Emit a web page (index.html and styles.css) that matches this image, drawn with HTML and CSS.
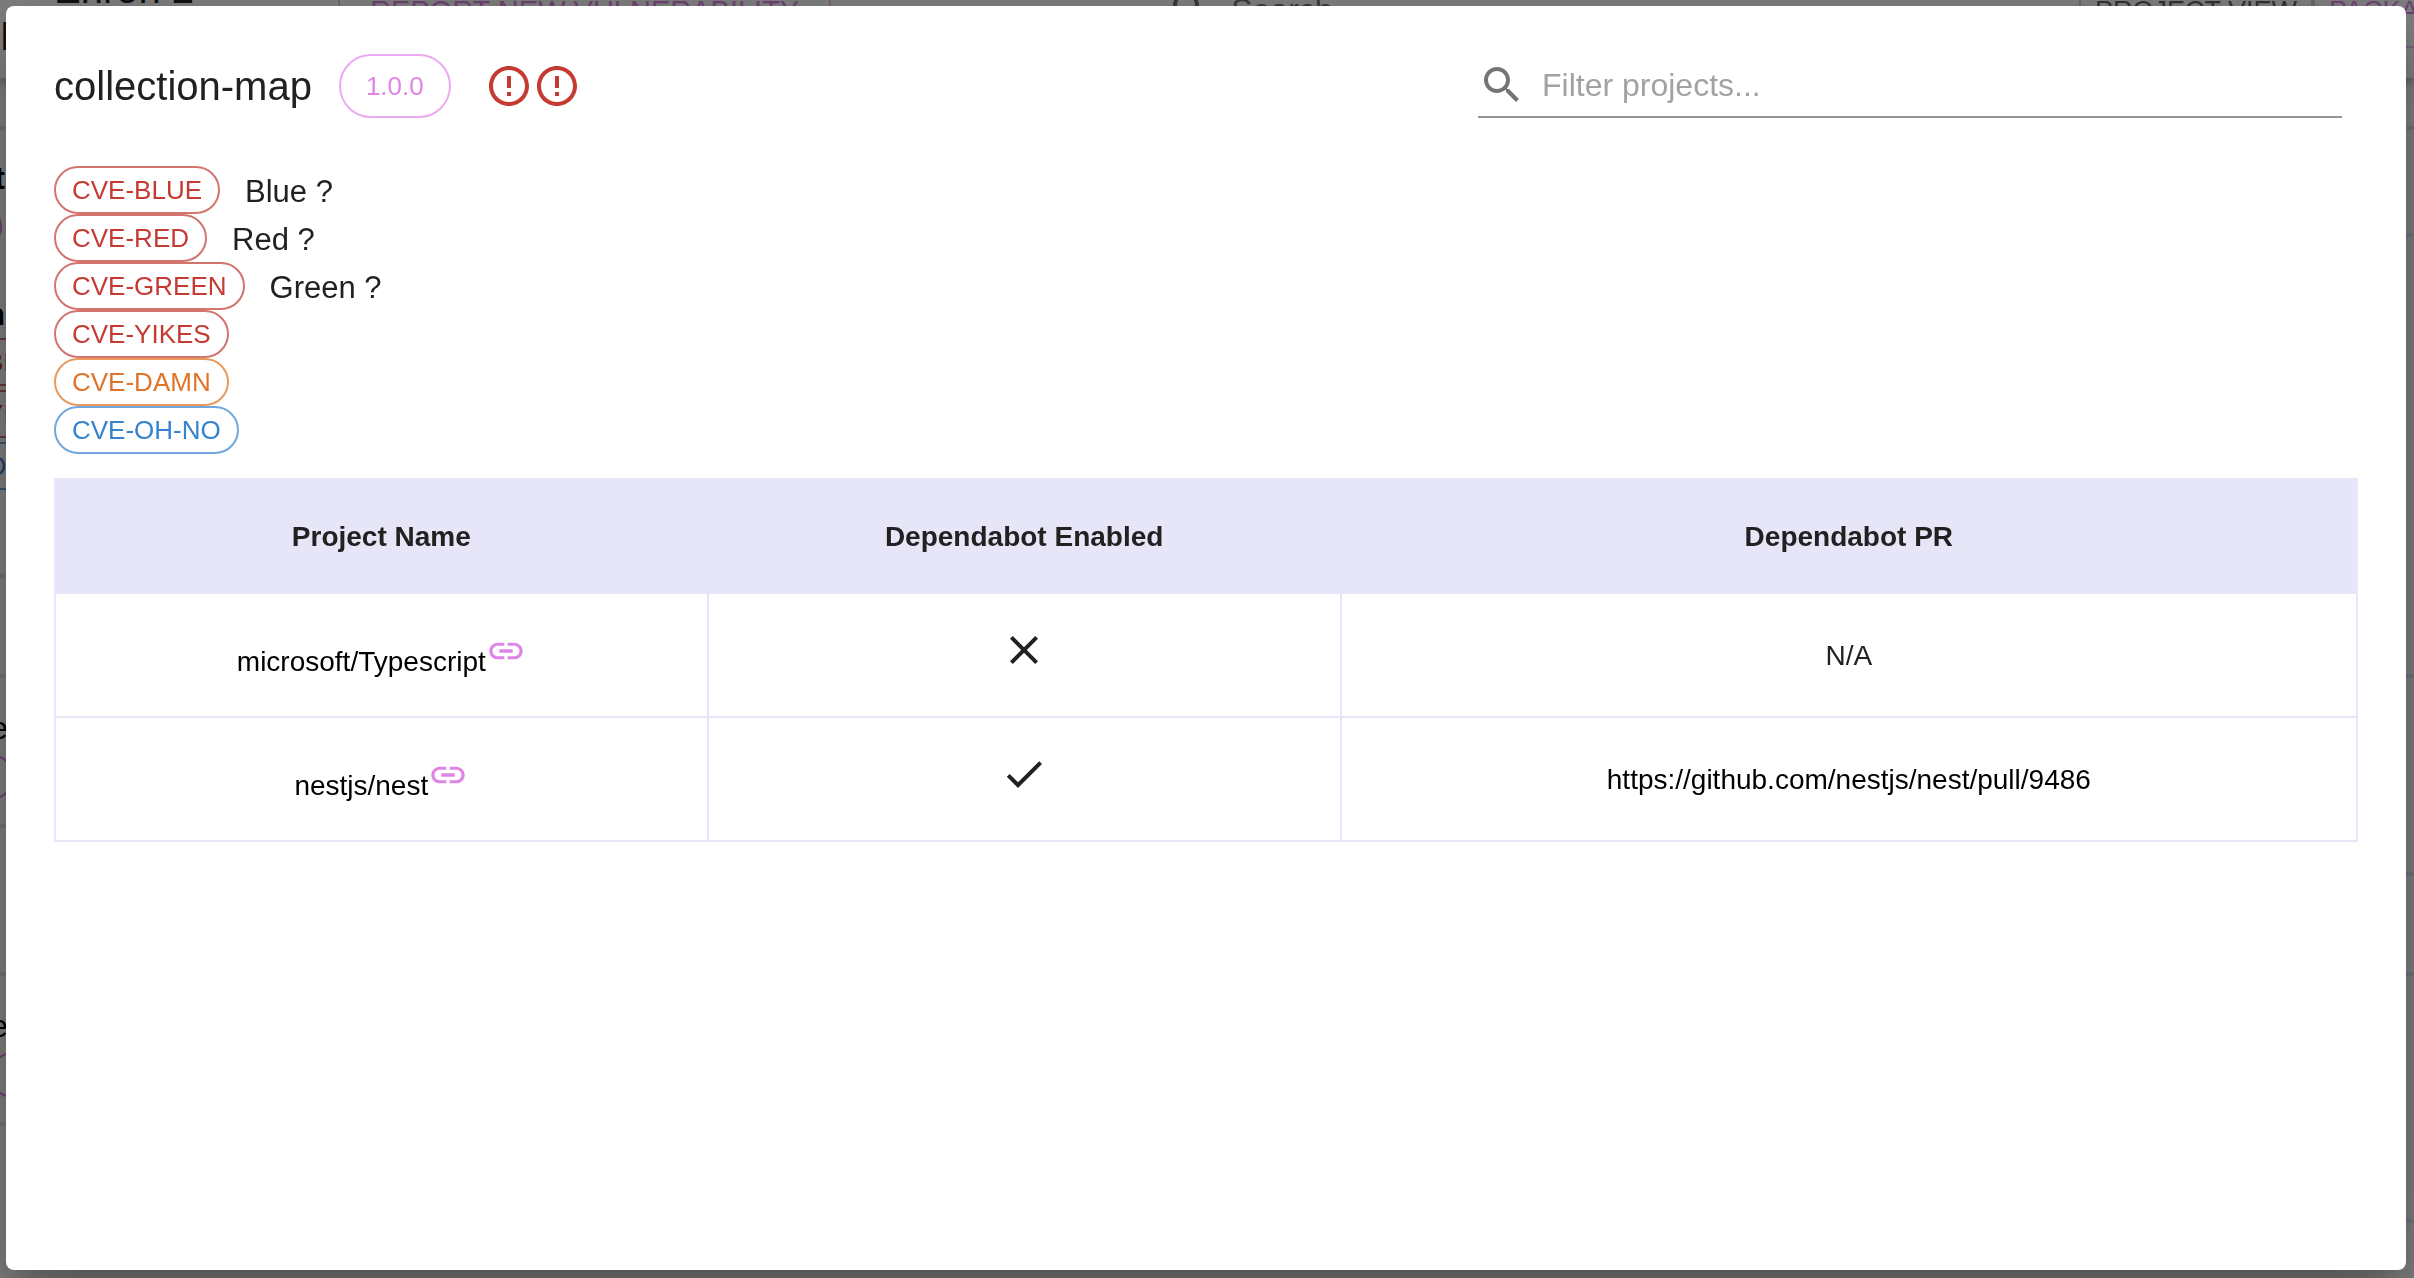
FILE: index.html
```html
<!DOCTYPE html>
<html lang="en">
<head>
<meta charset="utf-8">
<title>collection-map</title>
<link rel="stylesheet" href="styles.css">
</head>
<body>
<div class="page" inert>
  <header class="appbar">
    <div class="brand"><span class="brand-top">Enron 2</span><span>D</span></div>
    <button class="outline-btn report" type="button">REPORT NEW VULNERABILITY</button>
    <label class="page-search">
      <svg class="icon-lg" viewBox="0 0 24 24"><path d="M15.5 14h-.79l-.28-.27C15.41 12.59 16 11.11 16 9.5 16 5.91 13.09 3 9.5 3S3 5.91 3 9.5 5.91 16 9.5 16c1.61 0 3.09-.59 4.23-1.57l.27.28v.79l5 4.99L20.49 19l-4.99-5zm-6 0C7.01 14 5 11.99 5 9.5S7.01 5 9.5 5 14 7.01 14 9.5 11.99 14 9.5 14z"/></svg>
      <input class="page-search-input" type="text" placeholder="Search">
    </label>
    <div class="view-switch">
      <button class="outline-btn view current" type="button">PROJECT VIEW</button>
      <button class="outline-btn view" type="button">PACKAGE VIEW</button>
    </div>
  </header>
  <div class="cards">
    <section class="card card-tall">
      <div class="edge strong">t</div>
      <div class="edge-chip version"></div>
      <div class="edge strong">n</div>
      <div class="edge-chips">
        <span class="chip high">CVE-BLUE</span>
        <span class="chip high">CVE-YIKES</span>
        <span class="chip low">CVE-OH-NO</span>
      </div>
    </section>
    <section class="card card-xs"></section>
    <section class="card card-sm"><div class="edge">e</div><div class="edge-chip ends"></div></section>
    <section class="card card-md"></section>
    <section class="card card-sm"><div class="edge">e</div><div class="edge-chip starts"></div></section>
    <section class="card card-lg"></section>
  </div>
</div>

<div class="backdrop">
  <div class="dialog" role="dialog" aria-modal="true" aria-labelledby="dialog-title">
    <div class="dialog-head">
      <h1 class="dialog-title" id="dialog-title">collection-map</h1>
      <span class="version-chip">1.0.0</span>
      <div class="alerts">
        <svg class="icon-lg" viewBox="0 0 24 24" role="img" aria-label="Alert"><path d="M11 15h2v2h-2zm0-8h2v6h-2zm.99-5C6.47 2 2 6.48 2 12s4.47 10 9.99 10C17.52 22 22 17.52 22 12S17.52 2 11.99 2zM12 20c-4.42 0-8-3.58-8-8s3.58-8 8-8 8 3.58 8 8-3.58 8-8 8z"/></svg>
        <svg class="icon-lg" viewBox="0 0 24 24" role="img" aria-label="Alert"><path d="M11 15h2v2h-2zm0-8h2v6h-2zm.99-5C6.47 2 2 6.48 2 12s4.47 10 9.99 10C17.52 22 22 17.52 22 12S17.52 2 11.99 2zM12 20c-4.42 0-8-3.58-8-8s3.58-8 8-8 8 3.58 8 8-3.58 8-8 8z"/></svg>
      </div>
      <label class="filter">
        <svg class="icon-lg" viewBox="0 0 24 24" role="img" aria-label="Filter projects"><path d="M15.5 14h-.79l-.28-.27C15.41 12.59 16 11.11 16 9.5 16 5.91 13.09 3 9.5 3S3 5.91 3 9.5 5.91 16 9.5 16c1.61 0 3.09-.59 4.23-1.57l.27.28v.79l5 4.99L20.49 19l-4.99-5zm-6 0C7.01 14 5 11.99 5 9.5S7.01 5 9.5 5 14 7.01 14 9.5 11.99 14 9.5 14z"/></svg>
        <input class="filter-input" type="text" placeholder="Filter projects...">
      </label>
    </div>

    <ul class="cve-list">
      <li class="cve"><span class="chip high">CVE-BLUE</span><span class="cve-note">Blue ?</span></li>
      <li class="cve"><span class="chip high">CVE-RED</span><span class="cve-note">Red ?</span></li>
      <li class="cve"><span class="chip high">CVE-GREEN</span><span class="cve-note">Green ?</span></li>
      <li class="cve"><span class="chip high">CVE-YIKES</span></li>
      <li class="cve"><span class="chip medium">CVE-DAMN</span></li>
      <li class="cve"><span class="chip low">CVE-OH-NO</span></li>
    </ul>

    <table class="projects">
      <colgroup><col class="col-name"><col class="col-enabled"><col></colgroup>
      <thead>
        <tr><th scope="col">Project Name</th><th scope="col">Dependabot Enabled</th><th scope="col">Dependabot PR</th></tr>
      </thead>
      <tbody>
        <tr>
          <td><a class="project-link" href="https://github.com/microsoft/Typescript">microsoft/Typescript<svg class="icon-link" viewBox="0 0 24 24"><path d="M3.9 12c0-1.71 1.39-3.1 3.1-3.1h4V7H7c-2.76 0-5 2.24-5 5s2.24 5 5 5h4v-1.9H7c-1.71 0-3.1-1.39-3.1-3.1zM8 13h8v-2H8v2zm9-6h-4v1.9h4c1.71 0 3.1 1.39 3.1 3.1s-1.39 3.1-3.1 3.1h-4V17h4c2.76 0 5-2.24 5-5s-2.24-5-5-5z"/></svg></a></td>
          <td><svg class="icon-lg state" viewBox="0 0 24 24" role="img" aria-label="No"><path d="M19 6.41 17.59 5 12 10.59 6.41 5 5 6.41 10.59 12 5 17.59 6.41 19 12 13.41 17.59 19 19 17.59 13.41 12z"/></svg></td>
          <td>N/A</td>
        </tr>
        <tr>
          <td><a class="project-link" href="https://github.com/nestjs/nest">nestjs/nest<svg class="icon-link" viewBox="0 0 24 24"><path d="M3.9 12c0-1.71 1.39-3.1 3.1-3.1h4V7H7c-2.76 0-5 2.24-5 5s2.24 5 5 5h4v-1.9H7c-1.71 0-3.1-1.39-3.1-3.1zM8 13h8v-2H8v2zm9-6h-4v1.9h4c1.71 0 3.1 1.39 3.1 3.1s-1.39 3.1-3.1 3.1h-4V17h4c2.76 0 5-2.24 5-5s-2.24-5-5-5z"/></svg></a></td>
          <td><svg class="icon-lg state" viewBox="0 0 24 24" role="img" aria-label="Yes"><path d="M9 16.17 4.83 12l-1.42 1.41L9 19 21 7l-1.41-1.41z"/></svg></td>
          <td><a class="project-link" href="https://github.com/nestjs/nest/pull/9486">https://github.com/nestjs/nest/pull/9486</a></td>
        </tr>
      </tbody>
    </table>
  </div>
</div>
</body>
</html>
```
FILE: styles.css
```css
* {
  box-sizing: border-box;
}

html,
body {
  height: 100%;
}

body {
  margin: 0;
  overflow: hidden;
  background: #fff;
  color: #212121;
  font-family: "Liberation Sans", Arial, Helvetica, sans-serif;
  font-size: 28px;
  line-height: 40px;
}

svg {
  fill: currentColor;
}

.icon-lg {
  flex: none;
  width: 48px;
  height: 48px;
}

/* Page behind the dialog, scrolled down and right */

.page {
  margin-top: -58px;
}

.appbar {
  display: flex;
  align-items: center;
  height: 136px;
  box-shadow: 0 4px 8px rgba(0, 0, 0, 0.2), 0 8px 20px rgba(0, 0, 0, 0.16);
}

.brand {
  display: flex;
  flex-direction: column;
  width: 338px;
  padding-top: 6px;
  font-size: 40px;
  line-height: 47px;
}

.brand-top {
  padding-left: 54px;
}

.outline-btn {
  flex: none;
  height: 76px;
  padding: 2px 16px 0;
  border: 2px solid #f0c3f4;
  background: none;
  color: #df85e8;
  font: inherit;
  font-size: 27px;
  white-space: nowrap;
}

.outline-btn.report {
  padding: 2px 30px 0;
  border-radius: 8px;
  font-size: 29px;
}

.outline-btn.view {
  padding: 2px 14px 0;
}

.outline-btn.current {
  border-color: #d0d0d0;
  color: #666;
}

.page-search {
  display: flex;
  flex: 1;
  align-items: center;
  gap: 16px;
  padding-left: 336px;
  color: #757575;
}

.page-search-input {
  width: 400px;
  padding: 0;
  border: 0;
  background: none;
  font: inherit;
  font-size: 32px;
}

.view-switch {
  display: flex;
  margin-right: -136px;
}

.cards {
  display: grid;
  grid-template-columns: 1fr 1fr;
  gap: 96px;
  align-items: start;
  margin: 48px -100px 0 -94px;
}

.card {
  border: 4px solid #e6e6fa;
}

.card-tall {
  height: 452px;
  padding-top: 28px;
}

.card-xs {
  height: 111px;
}

.card-sm {
  height: 154px;
  padding-top: 30px;
}

.card-md {
  height: 202px;
}

.card-lg {
  height: 251px;
}

.edge {
  width: 98px;
  color: #000;
  font-size: 32px;
  text-align: right;
}

.edge.strong {
  width: 95px;
  font-weight: bold;
}

.edge-chip {
  width: 92px;
  height: 46px;
  margin-top: 6px;
  border: 2px solid #df85e8;
  border-radius: 23px;
}

.edge-chip.version {
  margin-bottom: 44px;
}

.edge-chip.ends {
  width: 104px;
}

.edge-chip.starts {
  margin-left: 80px;
}

.edge-chips {
  display: flex;
  flex-direction: column;
  gap: 4px;
  align-items: flex-start;
  margin: 4px 0 0 -4px;
}

/* Dialog */

.backdrop {
  position: fixed;
  inset: 0;
  display: flex;
  padding: 6px 8px 8px 6px;
  background: rgba(0, 0, 0, 0.5);
}

.dialog {
  flex: 1;
  padding: 48px;
  overflow: auto;
  border-radius: 8px;
  background: #fff;
  box-shadow:
    0 22px 30px -14px rgba(0, 0, 0, 0.2),
    0 48px 76px 6px rgba(0, 0, 0, 0.14),
    0 18px 92px 16px rgba(0, 0, 0, 0.12);
}

.dialog-head {
  display: flex;
  align-items: center;
  height: 64px;
}

.dialog-title {
  margin: 0 27px 0 0;
  font-size: 40px;
  font-weight: normal;
}

.version-chip {
  padding: 10px 25px;
  border: 2px solid #ecaaf2;
  border-radius: 32px;
  color: #df85e8;
  font-size: 26px;
}

.alerts {
  display: flex;
  margin-left: 34px;
  color: #c53a32;
}

.filter {
  display: flex;
  align-items: center;
  gap: 16px;
  width: 37.5%;
  height: 64px;
  margin: 0 16px 0 auto;
  border-bottom: 2px solid #949494;
  color: #757575;
}

.filter-input {
  flex: 1;
  min-width: 0;
  padding: 0;
  border: 0;
  outline: 0;
  background: none;
  color: #212121;
  font: inherit;
  font-size: 32px;
}

.filter-input::placeholder {
  color: #a2a2a2;
}

.cve-list {
  margin: 48px 0 24px;
  padding: 0;
  list-style: none;
}

.cve {
  display: flex;
  gap: 25px;
}

.cve-note {
  height: 48px;
  font-size: 31px;
  line-height: 52px;
}

.chip {
  height: 48px;
  padding: 0 16px;
  border: 2px solid;
  border-radius: 24px;
  font-size: 26px;
  line-height: 44px;
}

.chip.high {
  border-color: #d4746e;
  color: #c53a32;
}

.chip.medium {
  border-color: #e89a5e;
  color: #df7429;
}

.chip.low {
  border-color: #71a7dc;
  color: #3583ce;
}

.projects {
  width: 100%;
  border-collapse: collapse;
  table-layout: fixed;
  text-align: center;
}

.col-name {
  width: 28.35%;
}

.col-enabled {
  width: 27.5%;
}

.projects th,
.projects td {
  padding: 2px 16px 0;
  border: 2px solid #e6e6f8;
}

.projects th {
  height: 114px;
  background: #e6e6f8;
}

.projects td {
  height: 124px;
}

.state {
  display: block;
  margin: 0 auto 12px;
}

.project-link {
  color: #000;
  text-decoration: none;
}

.icon-link {
  width: 40px;
  height: 40px;
  color: #df85e8;
}
```
